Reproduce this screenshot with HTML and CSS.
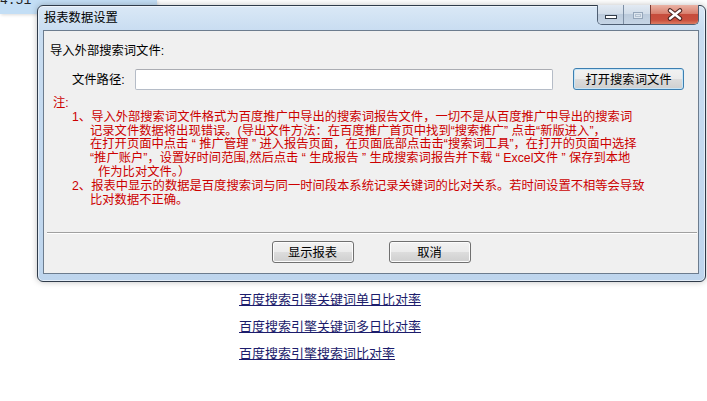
FILE: index.html
```html
<!DOCTYPE html>
<html lang="zh-CN">
<head>
  <meta charset="UTF-8">
  <title>报表数据设置</title>
  <link rel="stylesheet" href="styles.css">
</head>
<body>
  <div class="topbox"><span>4.51</span></div>

  <div class="links">
    <a href="#">百度搜索引擎关键词单日比对率</a>
    <a href="#">百度搜索引擎关键词多日比对率</a>
    <a href="#">百度搜索引擎搜索词比对率</a>
  </div>

  <div class="window">
    <div class="titlebar">
      <span class="title">报表数据设置</span>
      <div class="caption-btns">
        <span class="cbtn min">
          <svg width="25" height="19"><rect x="7.5" y="10.5" width="11" height="3" fill="#fff" stroke="#333d4a"/></svg>
        </span>
        <span class="cbtn max">
          <svg width="26" height="19"><rect x="9.5" y="7.5" width="9" height="6" fill="#dde6ef" stroke="#95a6ba"/><rect x="11.5" y="9.5" width="5" height="2" fill="none" stroke="#b4c2d2"/></svg>
        </span>
        <span class="cbtn close">
          <svg width="47" height="19">
            <path d="M19 5.5 L29 13.5 M29 5.5 L19 13.5" stroke="#4a2420" stroke-width="4.6" stroke-linecap="round"/>
            <path d="M19 5.5 L29 13.5 M29 5.5 L19 13.5" stroke="#fff" stroke-width="2.4" stroke-linecap="round"/>
          </svg>
        </span>
      </div>
    </div>

    <div class="client">
      <div class="main">
        <div class="group-label">导入外部搜索词文件:</div>
        <div class="path-row">
          <label class="path-label">文件路径:</label>
          <input type="text" class="path-input">
          <button class="btn default open-btn">打开搜索词文件</button>
        </div>
        <div class="notes">
          <div>注:</div>
          <div class="num">1、导入外部搜索词文件格式为百度推广中导出的搜索词报告文件，一切不是从百度推广中导出的搜索词</div>
          <div class="cont">记录文件数据将出现错误。(导出文件方法：在百度推广首页中找到“搜索推广” 点击“新版进入”，</div>
          <div class="cont">在打开页面中点击 “ 推广管理 ” 进入报告页面，在页面底部点击击“搜索词工具”，在打开的页面中选择</div>
          <div class="cont">“推广账户”，设置好时间范围,然后点击 “ 生成报告 ” 生成搜索词报告并下载 “ Excel文件 ” 保存到本地</div>
          <div class="indent">作为比对文件。）</div>
          <div class="num">2、报表中显示的数据是百度搜索词与同一时间段本系统记录关键词的比对关系。若时间设置不相等会导致</div>
          <div class="cont">比对数据不正确。</div>
        </div>
      </div>
      <div class="separator"></div>
      <div class="actions">
        <button class="btn">显示报表</button>
        <button class="btn">取消</button>
      </div>
    </div>
  </div>
</body>
</html>
```

FILE: styles.css
```css
body {
  margin: 0;
  width: 707px;
  height: 401px;
  position: relative;
  overflow: hidden;
  background: #fff;
  font-family: "Noto Sans CJK SC", sans-serif;
}
.topbox {
  width: 157px;
  height: 14px;
  background: #c3def5;
  box-shadow: 1px 1px 3px rgba(0, 0, 0, .15);
  overflow: hidden;
  font: 13px/14px "Liberation Mono", monospace;
  color: #222;
}
.topbox span {
  display: block;
  margin-top: -6px;
}
.links {
  margin: 271px 0 0 239px;
  display: flex;
  flex-direction: column;
  align-items: flex-start;
}
.links a {
  font-size: 13px;
  line-height: 27px;
  color: #1c1c6c;
  text-decoration: underline;
  text-underline-offset: 1px;
}

/* dialog */
.window {
  position: absolute;
  left: 37px;
  top: 5px;
  width: 669px;
  height: 277px;
  box-sizing: border-box;
  border: 1px solid #2f3b4a;
  border-radius: 6px;
  padding: 0 6px 7px 5px;
  display: flex;
  flex-direction: column;
  font-family: "Liberation Sans", "Noto Sans CJK SC", sans-serif;
  background: linear-gradient(180deg, #dae8f6 0, #c9ddf1 24px, #bed5ed 100%);
  box-shadow: inset 0 0 0 1px rgba(255, 255, 255, .55), 0 0 6px rgba(0, 0, 0, .25);
}
.titlebar {
  height: 24px;
  display: flex;
  justify-content: space-between;
  align-items: flex-start;
}
.title {
  padding-left: 1px;
  line-height: 24px;
  font-size: 12.3px;
  color: #000;
}
.caption-btns {
  display: flex;
  margin-top: -1px;
  height: 20px;
  box-sizing: border-box;
  border: 1px solid #4f5f73;
  border-top: none;
  border-radius: 0 0 5px 5px;
  overflow: hidden;
}
.cbtn {
  display: block;
  height: 19px;
  background: linear-gradient(#e2eaf3 0%, #d2dde9 45%, #bccbdc 50%, #c6d5e5 100%);
}
.cbtn svg {
  display: block;
}
.cbtn.min {
  width: 25px;
}
.cbtn.max {
  width: 26px;
  border-left: 1px solid #7d8ea3;
}
.cbtn.close {
  width: 47px;
  border-left: 1px solid #7a3a34;
  background: linear-gradient(#eab3a5 0%, #d9806f 45%, #c64c3c 50%, #c9503f 80%, #dc7c62 100%);
}
.client {
  flex: 1;
  border: 1px solid #6c7c8e;
  background: #f0f0f0;
  display: flex;
  flex-direction: column;
}
.main {
  padding: 13px 0 0 6px;
}
.group-label {
  font-size: 12.3px;
  line-height: 14px;
}
.path-row {
  display: flex;
  align-items: center;
  height: 22px;
  margin-top: 10px;
}
.path-label {
  width: 85px;
  box-sizing: border-box;
  padding-left: 22px;
  font-size: 12.3px;
}
.path-input {
  width: 418px;
  height: 21px;
  box-sizing: border-box;
  margin: 0;
  padding: 0;
  border: 1px solid #b5bcc7;
  border-top-color: #abadb3;
  border-radius: 2px;
  background: #fff;
}
.notes {
  margin-top: 7px;
  padding-left: 3px;
  color: #c00;
  font-size: 12.3px;
  line-height: 13.8px;
  white-space: nowrap;
}
.notes .num {
  padding-left: 19px;
}
.notes .cont {
  padding-left: 37px;
}
.notes .indent {
  padding-left: 45px;
}
.separator {
  margin: auto 1px 0 3px;
  border-top: 1px solid #a0a0a0;
  border-bottom: 1px solid #fff;
}
.actions {
  display: flex;
  justify-content: center;
  gap: 35px;
  padding: 7px 0 10px;
}
.btn {
  width: 82px;
  height: 22px;
  margin: 0;
  padding: 0;
  font-family: inherit;
  font-size: 12.3px;
  color: #000;
  border: 1px solid #707070;
  border-radius: 3px;
  background: linear-gradient(#f2f2f2 0%, #ebebeb 50%, #dddddd 50%, #cfcfcf 100%);
  box-shadow: inset 0 0 0 1px #fcfcfc;
}
.btn.default {
  border-color: #3c7fb1;
  box-shadow: inset 0 0 0 1px #c7e5f7;
}
.open-btn {
  width: 111px;
  margin-left: 20px;
}
```
